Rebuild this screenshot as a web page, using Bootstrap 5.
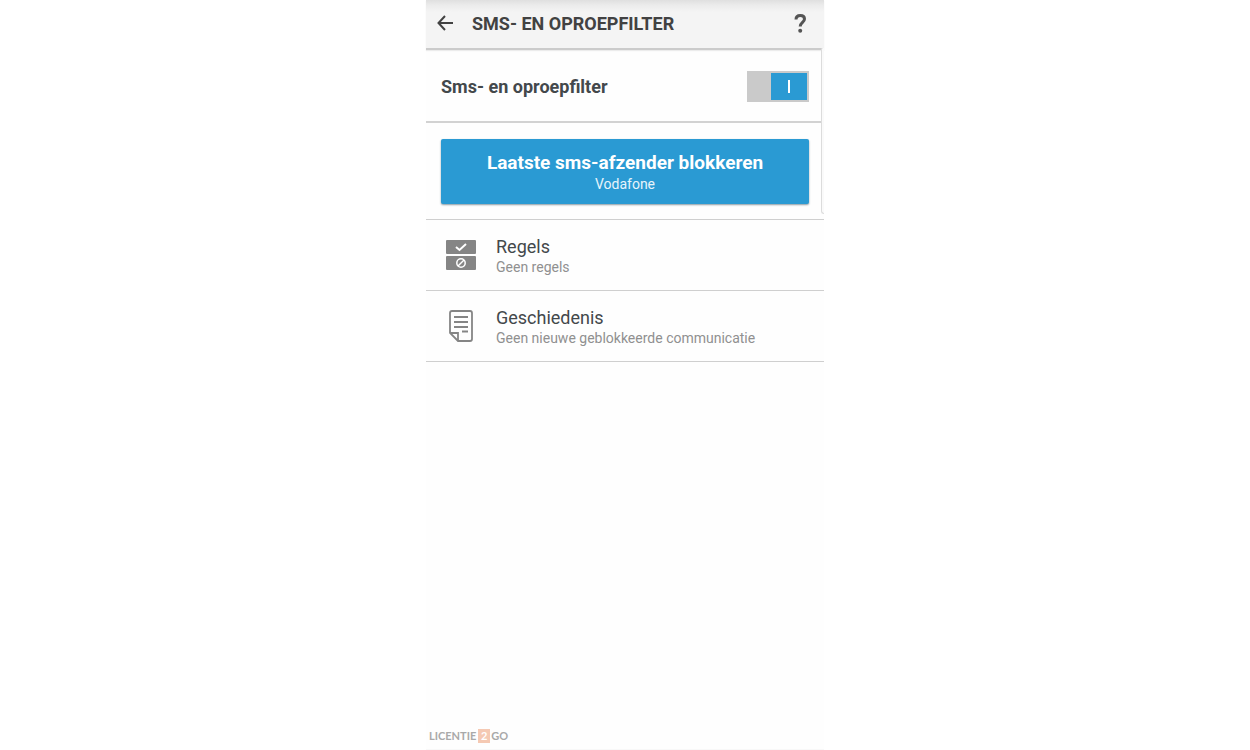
<!DOCTYPE html>
<html lang="nl">
<head>
<meta charset="utf-8">
<meta name="viewport" content="width=device-width, initial-scale=1">
<title>Sms- en oproepfilter</title>
<link rel="stylesheet" href="https://cdn.jsdelivr.net/npm/bootstrap@5.3.0/dist/css/bootstrap.min.css">
<style>
  body { font-family: Roboto, "Liberation Sans", sans-serif; color: #43484b; background: #fff; }
  .phone { max-width: 398px; background: #fefefe; }
  .topbar { height: 50px; padding: 0 16px 0 10px; background: linear-gradient(#dfdfdf, #ebebeb 5px, #f4f4f4 12px); border-bottom: 2px solid #cbcbcb; box-shadow: 0 1px 1px #ececec; color: #424242; }
  .topbar h1 { font-size: 18px; line-height: 24px; }
  .icon-btn { line-height: 0; color: inherit; height: 22px; padding: 0; }
  .help { color: #555; }
  .switch-row { height: 73px; border-bottom: 2px solid #d2d2d2; padding: 2px 15px 0; }
  .switch-row label { font-size: 18px; line-height: 25px; }
  .toggle { appearance: none; width: 62px; height: 31px; margin: 0; padding: 2px; background: #cacaca; display: flex; cursor: pointer; }
  .toggle::before { content: ""; width: 36px; height: 27px; background: linear-gradient(#fff, #fff) center / 2px 13px no-repeat #2a9ad3; }
  .toggle:checked { justify-content: flex-end; }
  .block-area { padding: 16px 15px 15px; border-bottom: 1px solid #cfcfcf; }
  .block-btn, .block-btn:hover { background: #2a9ad3; color: #fff; border: 0; border-radius: 2px; height: 65px; padding: 2px 0 0; box-shadow: 0 1px 2px #8a9aa2; }
  .block-title { font-size: 19px; line-height: 23px; }
  .sub-text { font-size: 14px; line-height: 20px; }
  .block-btn .sub-text { color: #e6f4fb; }
  .entry { height: 71px; padding: 0 15px; border-bottom: 1px solid #cfcfcf; color: #43484b; }
  .entry-icon { width: 40px; margin-right: 15px; }
  .entry-text { padding-top: 3px; }
  .entry-title { font-size: 18px; line-height: 21px; }
  .entry .sub-text { color: #909090; }
  .edge { top: 48px; right: 0; width: 3px; height: 166px; border: solid #dcdcdc; border-width: 0 0 1px 1px; border-radius: 3px 0 0 5px; background: #fafafa; }
  .brand { font: 700 11px/14px Lato, "Liberation Sans", sans-serif; color: #a9a9a9; padding: 0 3px 6px; border-bottom: 1px solid #f8f8f8; }
  .brand-two { background: #f5c9b3; color: #fff; width: 12px; margin: 0 1px 0 2px; }
</style>
</head>
<body>
<main class="phone position-relative mx-auto min-vh-100 d-flex flex-column">
  <header class="topbar d-flex align-items-center">
    <button type="button" class="btn icon-btn border-0" aria-label="Terug">
      <svg width="20" height="18" viewBox="0 0 20 18" fill="none" stroke="currentColor" stroke-width="2"><path d="M17 8H3M9 1 2.500 8 9 15"/></svg>
    </button>
    <h1 class="fw-bold mb-0 ms-3 ps-0 flex-grow-1">SMS- EN OPROEPFILTER</h1>
    <button type="button" class="btn icon-btn help border-0" aria-label="Help">
      <svg width="16" height="20" viewBox="0 0 16 20" fill="none" stroke="currentColor" stroke-width="3"><path d="M4 5.500C4 2.500 6 1.500 8.300 1.500c2.500 0 4.200 1.300 4.200 3.500 0 3.300-4.300 3.500-4.300 7.500"/><circle cx="8.200" cy="16.800" r="2" fill="currentColor" stroke="none"/></svg>
    </button>
  </header>
  <div class="switch-row d-flex align-items-center justify-content-between">
    <label class="fw-bold" for="filter">Sms- en oproepfilter</label>
    <input class="toggle" type="checkbox" role="switch" id="filter" checked>
  </div>
  <div class="block-area">
    <button type="button" class="btn block-btn w-100">
      <span class="block-title d-block fw-bold">Laatste sms-afzender blokkeren</span>
      <span class="sub-text d-block">Vodafone</span>
    </button>
  </div>
  <nav aria-label="Filter">
    <a href="#regels" class="entry d-flex align-items-center text-decoration-none">
      <span class="entry-icon d-flex justify-content-center">
        <svg width="30" height="30" viewBox="0 0 30 30" fill="none"><rect width="30" height="14" rx="1" fill="#858585"/><rect y="16" width="30" height="14" rx="1" fill="#858585"/><path d="m10 7 3.500 3L20 4" stroke="#fff" stroke-width="2"/><circle cx="15" cy="23" r="4.200" stroke="#fff" stroke-width="1.500"/><path d="m12 26 6-6" stroke="#fff" stroke-width="1.500"/></svg>
      </span>
      <span class="entry-text">
        <span class="entry-title d-block">Regels</span>
        <span class="sub-text d-block">Geen regels</span>
      </span>
    </a>
    <a href="#geschiedenis" class="entry d-flex align-items-center text-decoration-none">
      <span class="entry-icon d-flex justify-content-center">
        <svg width="24" height="32" viewBox="0 0 24 32" fill="none" stroke="#858585" stroke-width="1.800"><path d="M3 1h18q2 0 2 2v26q0 2-2 2H9L1 23V3q0-2 2-2Z"/><path d="M1 23h8v8M5 7h14M5 12h14M5 17h14M13 21.500h6"/></svg>
      </span>
      <span class="entry-text">
        <span class="entry-title d-block">Geschiedenis</span>
        <span class="sub-text d-block">Geen nieuwe geblokkeerde communicatie</span>
      </span>
    </a>
  </nav>
  <footer class="brand mt-auto d-flex align-items-center"><span>LICENTIE</span><span class="brand-two text-center">2</span><span>GO</span></footer>
  <div class="edge position-absolute"></div>
</main>
<script src="https://cdn.jsdelivr.net/npm/bootstrap@5.3.0/dist/js/bootstrap.bundle.min.js"></script>
</body>
</html>
